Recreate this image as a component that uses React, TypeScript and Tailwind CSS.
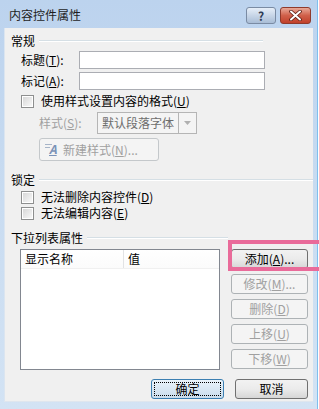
import React from "react";

const F = { fontFamily: '"Noto Sans CJK SC", "Noto Sans", sans-serif' };

function Acc({ pre, k, post = "" }: { pre: string; k: string; post?: string }) {
  return (
    <span>
      {pre}(<span className="underline underline-offset-[1px]">{k}</span>){post}
    </span>
  );
}

function Check() {
  return (
    <span className="w-[13px] h-[13px] border border-[#8e8f8f] bg-white p-[1px] shrink-0 flex">
      <span className="flex-1 bg-gradient-to-br from-[#d8d8d8] to-[#f8f8f8]" />
    </span>
  );
}

function SectionHeader({ text, mr }: { text: string; mr: string }) {
  return (
    <div className={`flex items-center h-[13px] pl-[6px] ${mr}`}>
      <span className="leading-[13px]">{text}</span>
      <span className="flex-1 ml-[4px] h-[2px] border-t border-t-[#d5dfe5] border-b border-b-white" />
    </div>
  );
}

function DisabledBtn({ children }: { children: React.ReactNode }) {
  return (
    <div className="h-[20px] w-[77px] rounded-[3px] border border-[#adb2b5] bg-[#f4f4f4] text-[#a0a0a0] flex items-center justify-center leading-none">
      {children}
    </div>
  );
}

export default function App() {
  return (
    <div className="w-[319px] h-[409px] bg-white relative overflow-hidden text-[12px] text-black" style={F}>
      <div className="w-[318px] h-[409px] bg-gradient-to-b from-[#bcd3ee] via-[#c9dcf1] to-[#d3e3f4] flex flex-col border-r-[1px] border-r-[#7fbfee]">
        {/* title bar */}
        <div className="h-[28px] flex items-start relative shrink-0">
          <span className="ml-[9px] mt-[7px] text-[12px] leading-[16px] text-[#1e1e1e]">内容控件属性</span>
          <div className="ml-auto mt-[7px] mr-[6px] flex gap-[4px]">
            <div className="w-[30px] h-[17px] rounded-[3px] border border-[#7a8ba3] bg-gradient-to-b from-[#e6eef8] to-[#a9bdd6] flex items-center justify-center text-[12px] font-bold text-[#2d3b55] leading-none">
              ?
            </div>
            <div className="w-[31px] h-[17px] rounded-[3px] border border-[#8f3a2c] bg-gradient-to-b from-[#e7a898] via-[#d0604a] to-[#c1402a] flex items-center justify-center">
              <svg width="13" height="11" viewBox="0 0 13 11">
                <path d="M2 1.5 L11 9.5 M11 1.5 L2 9.5" stroke="#5a1d14" strokeWidth="3.6" strokeLinecap="round" />
                <path d="M2 1.5 L11 9.5 M11 1.5 L2 9.5" stroke="#ffffff" strokeWidth="2" strokeLinecap="round" />
              </svg>
            </div>
          </div>
        </div>
        {/* body */}
        <div className="ml-[4px] mr-[4px] h-[373px] bg-[#f0f0f0] flex flex-col border-l border-l-[#dbe5f0]">
          <div className="mt-[6px]">
            <SectionHeader text="常规" mr="mr-[50px]" />
          </div>
          <div className="mt-[4px] flex items-center h-[18px]">
            <span className="pl-[16px] w-[74px]"><Acc pre="标题" k="T" post=":" /></span>
            <div className="w-[186px] h-[18px] border border-[#abadb3] bg-white" />
          </div>
          <div className="mt-[3px] flex items-center h-[18px]">
            <span className="pl-[16px] w-[74px]"><Acc pre="标记" k="A" post=":" /></span>
            <div className="w-[186px] h-[18px] border border-[#abadb3] bg-white" />
          </div>
          <div className="mt-[2px] flex items-center h-[18px] pl-[16px] gap-[7px]">
            <Check />
            <Acc pre="使用样式设置内容的格式" k="U" />
          </div>
          <div className="mt-[2px] flex items-center h-[22px] pl-[34px] text-[#a0a0a0]">
            <span className="w-[58px]"><Acc pre="样式" k="S" post=":" /></span>
            <div className="w-[82px] h-[22px] border border-[#b5b5b5] bg-[#f4f4f4] text-[#6d6d6d] flex items-center pl-[4px]">
              默认段落字体
            </div>
            <div className="w-[18px] h-[22px] border border-l-0 border-[#b5b5b5] bg-[#f4f4f4] flex items-center justify-center">
              <svg width="7" height="4" viewBox="0 0 7 4"><path d="M0 0 H7 L3.5 4 Z" fill="#b0b0b0" /></svg>
            </div>
          </div>
          <div className="mt-[4px] ml-[34px] w-[120px] h-[23px] rounded-[3px] border border-[#c4c8cb] bg-[#f4f4f4] flex items-center text-[#a0a0a0]">
            <span className="relative ml-[5px] w-[14px] h-[14px] mr-[4px]">
              <span className="absolute left-0 top-[1px] w-[7px] h-[1px] bg-[#a6b4c8]" />
              <span className="absolute left-0 top-[4px] w-[5px] h-[1px] bg-[#a6b4c8]" />
              <span className="absolute left-[4px] top-[-1px] text-[12px] leading-[14px] font-bold italic text-[#7b93b8] underline">A</span>
            </span>
            <Acc pre="新建样式" k="N" post="..." />
          </div>
          <div className="mt-[12px]">
            <SectionHeader text="锁定" mr="mr-0" />
          </div>
          <div className="mt-[3px] flex items-center h-[16px] pl-[16px] gap-[7px]">
            <Check />
            <Acc pre="无法删除内容控件" k="D" />
          </div>
          <div className="flex items-center h-[16px] pl-[16px] gap-[7px]">
            <Check />
            <Acc pre="无法编辑内容" k="E" />
          </div>
          <div className="mt-[10px]">
            <SectionHeader text="下拉列表属性" mr="mr-[85px]" />
          </div>
          <div className="mt-[5px] flex">
            <div className="ml-[15px] w-[200px] h-[121px] border border-[#828790] bg-white flex flex-col">
              <div className="h-[19px] flex items-center bg-gradient-to-b from-white to-[#fbfbfb] border-b border-[#f0f0f0]">
                <span className="w-[103px] pl-[4px] h-full flex items-center border-r border-[#e2e3e5]">显示名称</span>
                <span className="pl-[4px]">值</span>
              </div>
            </div>
            <div className="ml-[11px] flex flex-col gap-[5px]">
              <div className="h-[20px] w-[77px] rounded-[3px] border border-[#707070] bg-gradient-to-b from-[#f2f2f2] via-[#ebebeb] to-[#d6d6d6] flex items-center justify-center leading-none">
                <Acc pre="添加" k="A" post="..." />
              </div>
              <DisabledBtn><Acc pre="修改" k="M" post="..." /></DisabledBtn>
              <DisabledBtn><Acc pre="删除" k="D" /></DisabledBtn>
              <DisabledBtn><Acc pre="上移" k="U" /></DisabledBtn>
              <DisabledBtn><Acc pre="下移" k="W" /></DisabledBtn>
            </div>
          </div>
          <div className="mt-[9px] flex pl-[146px] gap-[11px]">
            <div className="h-[20px] w-[73px] rounded-[3px] border border-[#3c7fb1] bg-gradient-to-b from-[#eaf3fa] to-[#c9dcec] p-[2px] flex">
              <div className="flex-1 border border-dotted border-black flex items-center justify-center leading-none">确定</div>
            </div>
            <div className="h-[20px] w-[73px] rounded-[3px] border border-[#707070] bg-gradient-to-b from-[#f2f2f2] via-[#ebebeb] to-[#d6d6d6] flex items-center justify-center leading-none">
              取消
            </div>
          </div>
        </div>
        <div className="ml-[4px] mr-[4px] h-[1px] bg-[#dfe6ee]" />
      </div>
      {/* highlight annotation */}
      <div className="absolute left-[228px] top-[240px] w-[100px] h-[31px] border-4 border-[#e96b9a]" />
    </div>
  );
}
